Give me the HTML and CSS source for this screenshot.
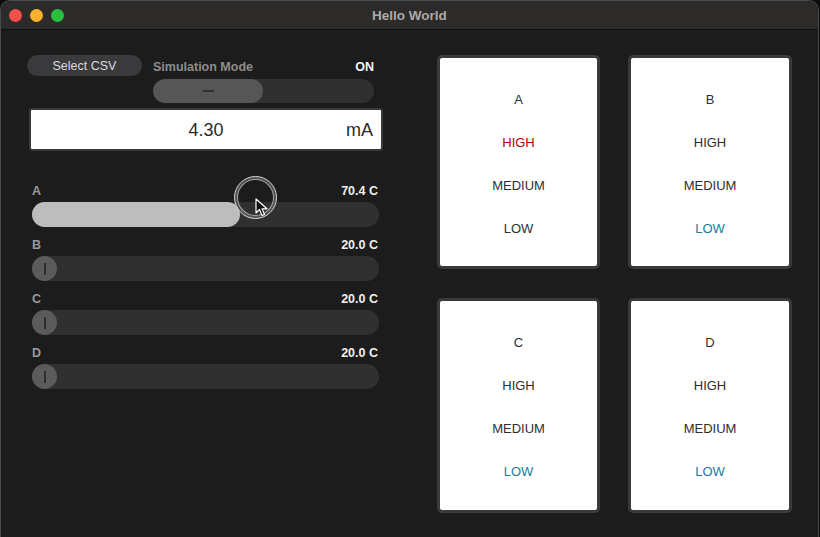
FILE: index.html
```html
<!DOCTYPE html>
<html>
<head>
<meta charset="utf-8">
<link rel="stylesheet" href="styles.css">
</head>
<body>
<div class="window">
  <div class="titlebar">
    <div class="lights">
      <span class="light red"></span>
      <span class="light yellow"></span>
      <span class="light green"></span>
    </div>
    <div class="title">Hello World</div>
  </div>
  <div class="content">
    <div class="left">
      <div class="top-row">
        <button class="csv-btn">Select CSV</button>
        <div class="sim">
          <div class="sim-head">
            <span class="sim-label">Simulation Mode</span>
            <span class="sim-state">ON</span>
          </div>
          <div class="segment">
            <div class="seg-on"><span class="dash"></span></div>
            <div class="seg-off"></div>
          </div>
        </div>
      </div>
      <div class="value-box">
        <span class="value">4.30</span>
        <span class="unit">mA</span>
      </div>
      <div class="sliders">
        <div class="slider">
          <div class="slider-head"><span class="s-name">A</span><span class="s-val">70.4 C</span></div>
          <div class="track"><div class="fill" style="width:208px"></div></div>
        </div>
        <div class="slider">
          <div class="slider-head"><span class="s-name">B</span><span class="s-val">20.0 C</span></div>
          <div class="track"><div class="thumb"><span class="grip"></span></div></div>
        </div>
        <div class="slider">
          <div class="slider-head"><span class="s-name">C</span><span class="s-val">20.0 C</span></div>
          <div class="track"><div class="thumb"><span class="grip"></span></div></div>
        </div>
        <div class="slider">
          <div class="slider-head"><span class="s-name">D</span><span class="s-val">20.0 C</span></div>
          <div class="track"><div class="thumb"><span class="grip"></span></div></div>
        </div>
      </div>
    </div>
    <div class="cards">
      <div class="card">
        <div class="card-in">
          <span class="lvl">A</span>
          <span class="lvl high-on">HIGH</span>
          <span class="lvl">MEDIUM</span>
          <span class="lvl">LOW</span>
        </div>
      </div>
      <div class="card">
        <div class="card-in">
          <span class="lvl">B</span>
          <span class="lvl">HIGH</span>
          <span class="lvl">MEDIUM</span>
          <span class="lvl low-on">LOW</span>
        </div>
      </div>
      <div class="card">
        <div class="card-in">
          <span class="lvl">C</span>
          <span class="lvl">HIGH</span>
          <span class="lvl">MEDIUM</span>
          <span class="lvl low-on">LOW</span>
        </div>
      </div>
      <div class="card">
        <div class="card-in">
          <span class="lvl">D</span>
          <span class="lvl">HIGH</span>
          <span class="lvl">MEDIUM</span>
          <span class="lvl low-on">LOW</span>
        </div>
      </div>
    </div>
  </div>
  <div class="cursor-ring">
    <svg class="cursor" width="14" height="20" viewBox="0 0 14 20">
      <path d="M1 1 L1 15 L4.5 11.5 L7 17.5 L9.5 16.5 L7 10.8 L12 10.8 Z" fill="#111" stroke="#fff" stroke-width="1.2" stroke-linejoin="round"/>
    </svg>
  </div>
</div>
</body>
</html>
```

FILE: styles.css
```css
* { box-sizing: border-box; }
html, body { margin: 0; padding: 0; }
body {
  width: 820px;
  height: 537px;
  background: #0c0c0c;
  font-family: "Liberation Sans", Arial, sans-serif;
  overflow: hidden;
}
.window {
  position: relative;
  width: 819px;
  height: 537px;
  border: 1px solid #4a4a4a;
  border-bottom: none;
  border-radius: 10px 10px 0 0;
  background: #1c1c1c;
  overflow: hidden;
}
.titlebar {
  height: 29px;
  background: #2c2b2a;
  border-bottom: 1px solid #111;
  display: flex;
  align-items: center;
  position: relative;
}
.lights {
  display: flex;
  gap: 8px;
  padding-left: 8px;
}
.light {
  width: 13px;
  height: 13px;
  border-radius: 50%;
  display: block;
}
.red { background: #f4504b; }
.yellow { background: #f8b12a; }
.green { background: #2ac03d; }
.title {
  position: absolute;
  left: 0;
  right: 0;
  text-align: center;
  font-size: 13.5px;
  font-weight: bold;
  color: #a9a9a9;
}
.content {
  display: grid;
  grid-template-columns: 356px 355px;
  column-gap: 54px;
  padding: 25px 0 0 26px;
}
.left { display: flex; flex-direction: column; }
.top-row { display: flex; gap: 11px; }
.csv-btn {
  width: 115px;
  height: 21px;
  border: none;
  border-radius: 11px;
  background: #3a3a3c;
  color: #dcdcdc;
  font-family: "Liberation Sans", Arial, sans-serif;
  font-size: 12.5px;
  padding: 0;
}
.sim { width: 221px; display: flex; flex-direction: column; gap: 2px; }
.sim-head {
  height: 22px;
  display: flex;
  align-items: center;
  justify-content: space-between;
  font-size: 12.5px;
  font-weight: bold;
  padding-top: 2px;
}
.sim-label { color: #8d8d8d; }
.sim-state { color: #f2f2f2; }
.segment {
  height: 24px;
  border-radius: 12px;
  background: #303030;
  display: flex;
  overflow: hidden;
}
.seg-on {
  width: 110px;
  border-radius: 12px;
  background: #565656;
  display: flex;
  align-items: center;
  justify-content: center;
}
.dash { width: 11px; height: 2px; background: #303030; display: block; }
.seg-off { flex: 1; }
.value-box {
  margin: 5px 0 0 2px;
  width: 354px;
  height: 43px;
  background: #fff;
  border: 2px solid #3a3a3a;
  border-radius: 3px;
  display: grid;
  grid-template-columns: 1fr auto 1fr;
  align-items: center;
  padding: 1px 8px 0;
  color: #2a2a2a;
  font-size: 18px;
}
.value { grid-column: 2; }
.unit { grid-column: 3; justify-self: end; }
.sliders {
  margin: 33px 0 0 5px;
  width: 347px;
  display: flex;
  flex-direction: column;
  gap: 11px;
}
.slider { display: flex; flex-direction: column; gap: 5px; }
.slider-head {
  height: 13px;
  display: flex;
  justify-content: space-between;
  align-items: center;
  font-size: 12.5px;
  font-weight: bold;
  padding-right: 1px;
}
.s-name { color: #9a9a9a; }
.s-val { color: #f0f0f0; }
.track {
  height: 25px;
  border-radius: 13px;
  background: #303030;
  display: flex;
}
.fill {
  height: 25px;
  border-radius: 13px;
  background: #bdbdbd;
}
.thumb {
  width: 25px;
  height: 25px;
  border-radius: 50%;
  background: #5b5b5b;
  display: flex;
  align-items: center;
  justify-content: center;
}
.grip { width: 2px; height: 12px; background: #2e2e2e; display: block; }
.cards {
  display: grid;
  grid-template-columns: 163px 164px;
  grid-template-rows: 214px 215px;
  column-gap: 28px;
  row-gap: 29px;
}
.card {
  border: 3px solid #3a3a3a;
  border-radius: 5px;
  background: #3a3a3a;
}
.card-in {
  height: 100%;
  background: #fff;
  border-radius: 2px;
  display: flex;
  flex-direction: column;
  align-items: center;
  padding-top: 35px;
  gap: 29px;
}
.lvl {
  font-size: 13px;
  line-height: 14px;
  color: #2e2e2e;
}
.high-on { color: #b0000c; }
.low-on { color: #1c7a9a; }
.cursor-ring {
  position: absolute;
  left: 233px;
  top: 175px;
  width: 43px;
  height: 43px;
  border-radius: 50%;
  border: 1px solid #d8d8d8;
  box-shadow: inset 0 0 0 2px rgba(0,0,0,0.5), inset 0 0 0 3px rgba(220,220,220,0.7);
}
.cursor {
  position: absolute;
  left: 20px;
  top: 21px;
}
```
